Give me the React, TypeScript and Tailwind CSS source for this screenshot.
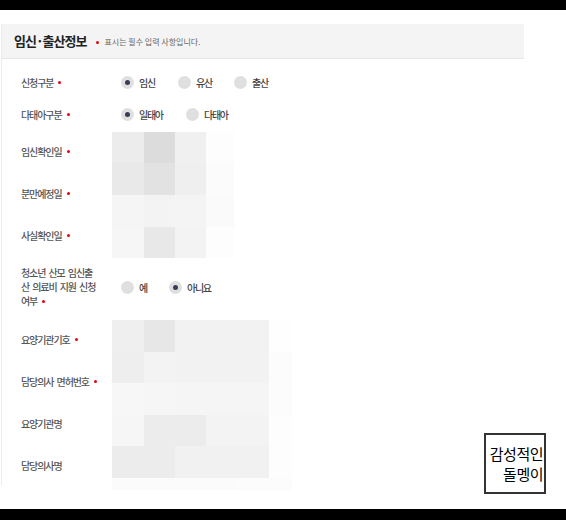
import React from 'react';

const font = { fontFamily: '"Noto Sans CJK KR", "Noto Sans", sans-serif' };

// redaction mosaics over the date / hospital inputs
const mosaicDates = [
	['bg-[#ececec]', 'bg-[#dcdcdc]', 'bg-[#f0f0f0]', 'bg-[#fdfdfd]'],
	['bg-[#e9e9e9]', 'bg-[#e2e2e2]', 'bg-[#efefef]', 'bg-[#fbfbfb]'],
	['bg-[#f5f5f5]', 'bg-[#f3f3f3]', 'bg-[#f4f4f4]', 'bg-[#fafafa]'],
	['bg-[#f6f6f6]', 'bg-[#e8e8e8]', 'bg-[#f3f3f3]', 'bg-[#fdfdfd]'],
];

const mosaicHospital = [
	['bg-[#efefef]', 'bg-[#e7e7e7]', 'bg-[#f2f2f2]', 'bg-[#f2f2f2]', 'bg-[#f2f2f2]', 'bg-[#fefefe]'],
	['bg-[#eeeeee]', 'bg-[#f3f3f3]', 'bg-[#f2f2f2]', 'bg-[#f2f2f2]', 'bg-[#f2f2f2]', 'bg-[#fcfcfc]'],
	['bg-[#f7f7f7]', 'bg-[#f6f6f6]', 'bg-[#f5f5f5]', 'bg-[#f5f5f5]', 'bg-[#f5f5f5]', 'bg-[#fcfcfc]'],
	['bg-[#f6f6f6]', 'bg-[#ececec]', 'bg-[#ececec]', 'bg-[#f3f3f3]', 'bg-[#f3f3f3]', 'bg-[#fdfdfd]'],
	['bg-[#ececec]', 'bg-[#ececec]', 'bg-[#f1f1f1]', 'bg-[#f1f1f1]', 'bg-[#f1f1f1]', 'bg-[#fdfdfd]'],
	['bg-[#fbfbfb]', 'bg-[#fbfbfb]', 'bg-[#fbfbfb]', 'bg-[#fbfbfb]', 'bg-[#fcfcfc]', 'bg-[#fcfcfc]'],
];

function Req() {
	return <span className="ml-[5px] inline-block h-[3px] w-[3px] shrink-0 rounded-full bg-[#e60012]" />;
}

function Label({ text, required }: { text: string; required?: boolean }) {
	return (
		<div className="flex items-center text-[10px] font-medium tracking-[-1.1px] text-[#555] [word-spacing:2px]">
			<span>{text}</span>
			{required && <Req />}
		</div>
	);
}

function Radio({ label, checked, width }: { label: string; checked?: boolean; width: string }) {
	return (
		<div className={`flex items-center gap-[5px] ${width}`}>
			<span className="flex h-[13px] w-[13px] shrink-0 items-center justify-center rounded-full bg-[#dfdfdf]">
				{checked && <span className="h-[5px] w-[5px] rounded-full bg-[#3a3d56]" />}
			</span>
			<span className="text-[10px] font-medium tracking-[-1.3px] text-[#444]">{label}</span>
		</div>
	);
}

export default function App() {
	return (
		<div className="relative flex h-[520px] w-[566px] flex-col bg-white" style={font}>
			<div className="h-[10px] bg-black" />

			<div className="flex-1">
				<div className="ml-[1px] mt-[14px] h-[462px] w-[523px] border-l border-[#ececec]">
					<div className="flex h-[35px] items-center border-b border-[#e6e6e6] bg-[#f4f4f4] pl-[12px]">
						<h2 className="text-[13px] font-bold tracking-[-1px] text-[#222]">임신·출산정보</h2>
						<span className="ml-[10px] mt-[2px] h-[3px] w-[3px] rounded-full bg-[#e60012]" />
						<span className="ml-[5px] mt-[2px] text-[8px] text-[#666]">표시는 필수 입력 사항입니다.</span>
					</div>

					<div className="pl-[19px] pt-[7px]">
						<div className="flex h-[32px] items-center">
							<div className="w-[100px]">
								<Label text="신청구분" required />
							</div>
							<Radio label="임신" checked width="w-[57px]" />
							<Radio label="유산" width="w-[56px]" />
							<Radio label="출산" width="w-[56px]" />
						</div>
						<div className="flex h-[32px] items-center">
							<div className="w-[100px]">
								<Label text="다태아구분" required />
							</div>
							<Radio label="일태아" checked width="w-[65px]" />
							<Radio label="다태아" width="w-[60px]" />
						</div>

						<div className="flex h-[126px] items-start">
							<div className="flex w-[91px] flex-col">
								<div className="flex h-[42px] items-center">
									<Label text="임신확인일" required />
								</div>
								<div className="flex h-[42px] items-center">
									<Label text="분만예정일" required />
								</div>
								<div className="flex h-[42px] items-center">
									<Label text="사실확인일" required />
								</div>
							</div>
							<div className="mt-[2px] grid grid-cols-[32px_31px_31px_28px] grid-rows-[31px_32px_32px_31px]">
								{mosaicDates.flat().map((c, i) => (
									<div key={i} className={c} />
								))}
							</div>
						</div>

						<div className="flex h-[62px] items-center">
							<div className="w-[100px] text-[10px] font-medium leading-[14px] tracking-[-1.1px] text-[#555] [word-spacing:2px]">
								청소년 산모 임신출
								<br />산 의료비 지원 신청
								<br />
								<span className="inline-flex items-center">
									여부
									<Req />
								</span>
							</div>
							<Radio label="예" width="w-[48px]" />
							<Radio label="아니요" checked width="w-[60px]" />
						</div>

						<div className="flex h-[168px] items-start">
							<div className="flex w-[91px] flex-col">
								<div className="flex h-[42px] items-center">
									<Label text="요양기관기호" required />
								</div>
								<div className="flex h-[42px] items-center">
									<Label text="담당의사 면허번호" required />
								</div>
								<div className="flex h-[42px] items-center">
									<Label text="요양기관명" />
								</div>
								<div className="flex h-[42px] items-center">
									<Label text="담당의사명" />
								</div>
							</div>
							<div className="mt-[2px] grid grid-cols-[32px_31px_31px_32px_31px_23px] grid-rows-[32px_31px_32px_31px_32px_12px]">
								{mosaicHospital.flat().map((c, i) => (
									<div key={i} className={c} />
								))}
							</div>
						</div>
					</div>
				</div>
			</div>

			<div className="h-[11px] bg-black" />

			<div className="absolute left-[484px] top-[433px] flex h-[61px] w-[62px] flex-col items-end justify-center border-2 border-[#333] bg-white pr-[1px] text-[15px] leading-[20px] tracking-[-0.5px] text-black">
				<span>감성적인</span>
				<span>돌멩이</span>
			</div>
		</div>
	);
}
